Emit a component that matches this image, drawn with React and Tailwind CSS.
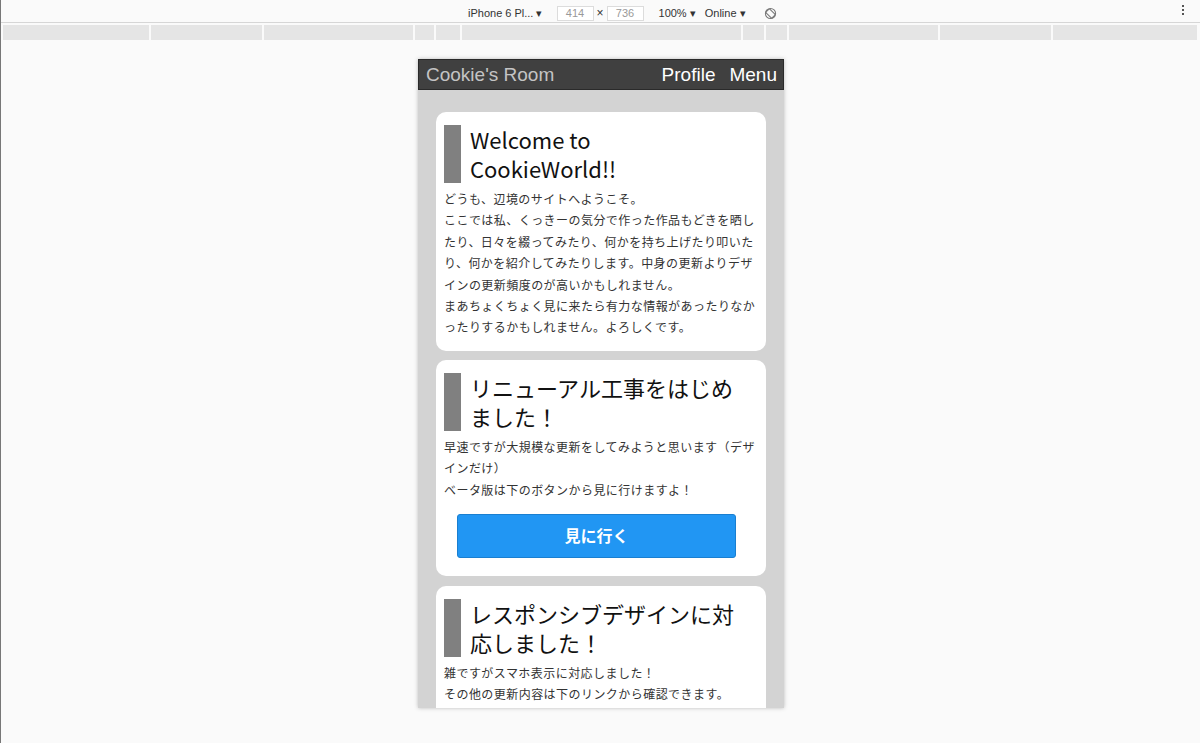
import React from 'react';

const SEGMENTS = [146, 111, 149, 19, 24, 279, 21, 21, 149, 111, 144];

const jp = { fontFamily: '"Noto Sans CJK JP", "Noto Sans", sans-serif' };

function Toolbar() {
  return (
    <div className="h-[23px] border-b border-[#d6d6d6] bg-[#fafafa] relative flex items-center text-[11px] text-[#333]" style={{ fontFamily: '"Liberation Sans", sans-serif' }}>
      <div className="absolute left-[467px] top-[4px] flex items-center">
        <span>iPhone 6 Pl... ▾</span>
        <span className="ml-[14px] w-[37px] h-[15px] border border-[#dcdcdc] text-[#999] flex items-center justify-center bg-white">414</span>
        <span className="mx-[3px] text-[12px]">×</span>
        <span className="w-[37px] h-[15px] border border-[#dcdcdc] text-[#999] flex items-center justify-center bg-white">736</span>
        <span className="ml-[15px]">100% ▾</span>
        <span className="ml-[9px]">Online ▾</span>
        <svg className="ml-[18px]" width="13" height="13" viewBox="0 0 14 14" fill="none" stroke="#777" strokeWidth="1.1">
          <circle cx="7" cy="7" r="5.5" />
          <rect x="4.2" y="2.5" width="5.6" height="9" rx="1" transform="rotate(-45 7 7)" />
        </svg>
      </div>
      <div className="absolute right-[16px] top-[5px] flex flex-col gap-[2px]">
        <span className="w-[2px] h-[2px] bg-[#555]" />
        <span className="w-[2px] h-[2px] bg-[#555]" />
        <span className="w-[2px] h-[2px] bg-[#555]" />
      </div>
    </div>
  );
}

function Ruler() {
  return (
    <div className="mt-[2px] h-[15px] flex gap-[2px] px-[2px]">
      {SEGMENTS.map((w, i) => (
        <div key={i} className="h-full bg-[#e5e5e5]" style={{ width: w }} />
      ))}
    </div>
  );
}

function Card({ title, children, className = '' }) {
  return (
    <div className={`bg-white rounded-[10px] px-2 pt-[13px] ${className}`}>
      <div className="flex">
        <div className="w-[17px] bg-[#808080] shrink-0" />
        <h2 className="pl-[9px] text-[22px] leading-[29px] text-[#111] pr-2" style={jp}>{title}</h2>
      </div>
      <div className="mt-[5px] text-[12px] leading-[21.4px] tracking-[0.45px] text-[#333]" style={jp}>
        {children}
      </div>
    </div>
  );
}

export default function App() {
  return (
    <div className="w-[1200px] h-[743px] bg-[#fafafa] flex flex-col overflow-hidden border-l border-[#777]">
      <Toolbar />
      <Ruler />
      <div className="flex justify-center pt-[19px] pl-[1px]">
        <div className="w-[366px] h-[649px] flex flex-col overflow-hidden shadow-[0_0_4px_rgba(0,0,0,0.25)]">
          <header className="h-[31px] shrink-0 bg-[#404040] border border-[#2a2a2a] flex items-center justify-between pt-[2px] pl-[7px] pr-[6px] text-[19px]" style={{ fontFamily: '"Liberation Sans", sans-serif' }}>
            <span className="text-[#c4c4c4]">Cookie's Room</span>
            <nav className="flex gap-[14px] text-white">
              <span>Profile</span>
              <span>Menu</span>
            </nav>
          </header>
          <main className="flex-1 bg-[#d3d3d3] pl-[18px] pr-[18px] pt-[22px] flex flex-col gap-[9px]">
            <Card title={<>Welcome to<br />CookieWorld!!</>} className="pb-[13px]">
              <p>どうも、辺境のサイトへようこそ。</p>
              <p>ここでは私、くっきーの気分で作った作品もどきを晒したり、日々を綴ってみたり、何かを持ち上げたり叩いたり、何かを紹介してみたりします。中身の更新よりデザインの更新頻度のが高いかもしれません。</p>
              <p>まあちょくちょく見に来たら有力な情報があったりなかったりするかもしれません。よろしくです。</p>
            </Card>
            <Card title={<>リニューアル工事をはじめ<br />ました！</>} className="pb-[18px] mb-[1px]">
              <p>早速ですが大規模な更新をしてみようと思います（デザインだけ）</p>
              <p>ベータ版は下のボタンから見に行けますよ！</p>
              <button className="mt-[14px] ml-[13px] w-[279px] h-[44px] rounded-[3px] bg-[#2196f3] border border-[#1a7fd0] text-white text-[16px] font-bold tracking-normal" style={jp}>
                見に行く
              </button>
            </Card>
            <Card title={<>レスポンシブデザインに対<br />応しました！</>} className="pb-4 shrink-0">
              <p>雑ですがスマホ表示に対応しました！</p>
              <p>その他の更新内容は下のリンクから確認できます。</p>
            </Card>
          </main>
        </div>
      </div>
    </div>
  );
}
